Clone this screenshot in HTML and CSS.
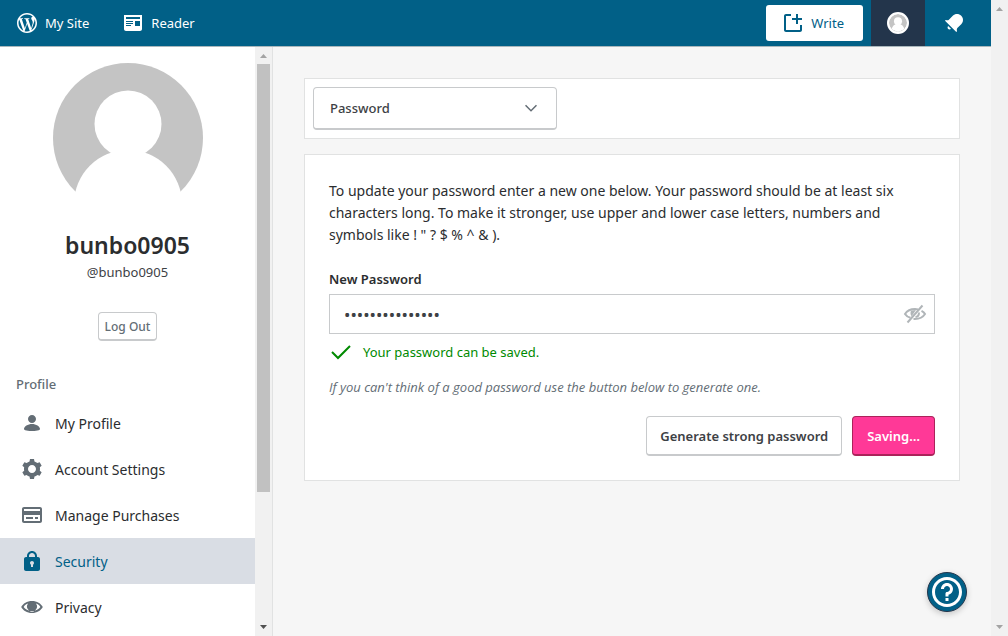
FILE: index.html
```html
<!DOCTYPE html>
<html lang="en">
<head>
<meta charset="utf-8">
<meta name="viewport" content="width=device-width, initial-scale=1">
<title>Security</title>
<link rel="stylesheet" href="styles.css">
</head>
<body>
<div class="app">
  <header class="masterbar">
    <a class="masterbar-item" href="#site">
      <svg class="icon" viewBox="0 0 24 24" aria-hidden="true"><path d="M12 2C6.477 2 2 6.477 2 12s4.477 10 10 10 10-4.477 10-10S17.523 2 12 2zM3.5 12c0-1.232.264-2.402.736-3.46L8.29 19.65C5.456 18.272 3.5 15.365 3.5 12zm8.5 8.501c-.834 0-1.64-.12-2.4-.345l2.55-7.41 2.613 7.157c.017.042.038.08.06.117-.884.31-1.833.48-2.823.48zm1.172-12.485c.512-.027.973-.08.973-.08.458-.055.404-.728-.054-.702 0 0-1.376.108-2.265.108-.835 0-2.24-.107-2.24-.107-.458-.026-.51.674-.053.7 0 0 .434.055.892.082l1.324 3.63-1.86 5.578-3.096-9.208c.512-.027.973-.08.973-.08.458-.055.403-.728-.055-.702 0 0-1.376.108-2.265.108-.16 0-.347-.003-.547-.01C6.418 5.025 9.03 3.5 12 3.5c2.213 0 4.228.846 5.74 2.232-.037-.002-.072-.007-.11-.007-.835 0-1.427.727-1.427 1.51 0 .7.404 1.292.835 1.993.323.566.7 1.293.7 2.344 0 .727-.28 1.572-.646 2.748l-.848 2.833-3.072-9.138zm3.1 11.332l2.597-7.506c.484-1.212.645-2.18.645-3.044 0-.313-.02-.603-.057-.874.664 1.21 1.042 2.6 1.042 4.078 0 3.136-1.7 5.874-4.227 7.347z"/></svg>
      <span>My Site</span>
    </a>
    <a class="masterbar-item" href="#reader">
      <svg class="icon" viewBox="0 0 24 24" aria-hidden="true"><path d="M3 4v14c0 1.1.9 2 2 2h14c1.1 0 2-.9 2-2V4H3zm7 11H5v-1h5v1zm2-2H5v-1h7v1zm0-2H5v-1h7v1zm7 4h-5v-5h5v5zm0-7H5V6h14v2z"/></svg>
      <span>Reader</span>
    </a>
    <a class="write" href="#write">
      <svg class="icon" viewBox="0 0 24 24" aria-hidden="true"><path d="M21 14v5c0 1.1-.9 2-2 2H5c-1.1 0-2-.9-2-2V5c0-1.1.9-2 2-2h5v2H5v14h14v-5h2z"/><path d="M21 7h-4V3h-2v4h-4v2h4v4h2V9h4V7z"/></svg>
      <span>Write</span>
    </a>
    <a class="me" href="#me" aria-label="My profile">
      <svg class="me-avatar" viewBox="0 0 150 150" aria-hidden="true"><circle cx="75" cy="75" r="75" fill="#c4c4c4"/><circle cx="75" cy="61" r="33.5" fill="#fff"/><path d="M22 128a54 54 0 0 1 106 0L75 150z" fill="#fff"/></svg>
    </a>
    <a class="bell" href="#notifications" aria-label="Notifications">
      <svg class="icon" viewBox="0 0 24 24" aria-hidden="true"><path d="M6.14 14.97l2.828 2.827c-.362.362-.862.586-1.414.586-1.105 0-2-.895-2-2 0-.552.224-1.052.586-1.414zm8.867 5.324L14.3 21 3 9.7l.706-.707 1.102.157c.754.108 1.69-.122 2.077-.51l3.885-3.884c2.34-2.34 6.135-2.34 8.475 0s2.34 6.135 0 8.475l-3.885 3.886c-.388.388-.618 1.323-.51 2.077l.157 1.1z"/></svg>
    </a>
  </header>

  <div class="page">
    <aside class="sidebar">
      <div class="sidebar-content">
        <div class="profile">
          <svg class="avatar" viewBox="0 0 150 150" role="img" aria-label="Avatar"><circle cx="75" cy="75" r="75" fill="#c4c4c4"/><circle cx="75" cy="61" r="33.5" fill="#fff"/><circle cx="75" cy="141" r="54" fill="#fff"/></svg>
          <h2 class="name">bunbo0905</h2>
          <div class="handle">@bunbo0905</div>
          <button class="logout" type="button">Log Out</button>
        </div>
        <nav class="menu">
          <h3 class="menu-heading">Profile</h3>
          <a class="menu-item" href="#profile">
            <svg class="icon" viewBox="0 0 24 24" aria-hidden="true"><path d="M12 4c2.21 0 4 1.79 4 4s-1.79 4-4 4-4-1.79-4-4 1.79-4 4-4zm0 16s8 0 8-2c0-2.4-3.9-5-8-5s-8 2.6-8 5c0 2 8 2 8 2z"/></svg>
            <span>My Profile</span>
          </a>
          <a class="menu-item" href="#account">
            <svg class="icon" viewBox="0 0 24 24" aria-hidden="true"><path d="M20 12c0-.568-.06-1.122-.174-1.656l1.834-1.612-2-3.464-2.322.786c-.82-.736-1.787-1.308-2.86-1.657L14 2h-4l-.48 2.396c-1.07.35-2.04.92-2.858 1.657L4.34 5.268l-2 3.464 1.834 1.612C4.06 10.878 4 11.432 4 12s.06 1.122.174 1.656L2.34 15.268l2 3.464 2.322-.786c.82.736 1.787 1.308 2.86 1.657L10 22h4l.48-2.396c1.07-.35 2.038-.92 2.858-1.657l2.322.786 2-3.464-1.834-1.613c.113-.535.174-1.09.174-1.656zm-8 4c-2.21 0-4-1.79-4-4s1.79-4 4-4 4 1.79 4 4-1.79 4-4 4z"/></svg>
            <span>Account Settings</span>
          </a>
          <a class="menu-item" href="#purchases">
            <svg class="icon" viewBox="0 0 24 24" aria-hidden="true"><path d="M20 4H4c-1.105 0-2 .895-2 2v12c0 1.105.895 2 2 2h16c1.105 0 2-.895 2-2V6c0-1.105-.895-2-2-2zm0 2v2H4V6h16zM4 18v-6h16v6H4zm2-4h7v2H6v-2zm9 0h3v2h-3v-2z"/></svg>
            <span>Manage Purchases</span>
          </a>
          <a class="menu-item selected" href="#security" aria-current="page">
            <svg class="icon" viewBox="0 0 24 24" aria-hidden="true"><path d="M18 8h-1V7c0-2.757-2.243-5-5-5S7 4.243 7 7v1H6c-1.105 0-2 .895-2 2v10c0 1.105.895 2 2 2h12c1.105 0 2-.895 2-2V10c0-1.105-.895-2-2-2zM9 7c0-1.654 1.346-3 3-3s3 1.346 3 3v1H9V7zm4 8.723V18h-2v-2.277c-.595-.346-1-.984-1-1.723 0-1.105.895-2 2-2s2 .895 2 2c0 .738-.405 1.376-1 1.723z"/></svg>
            <span>Security</span>
          </a>
          <a class="menu-item" href="#privacy">
            <svg class="icon" viewBox="0 0 24 24" aria-hidden="true"><path fill-rule="evenodd" d="M1.2 12C3 8.600 7 6 12 6s9 2.600 10.800 6C21 15.400 17 18 12 18s-9-2.600-10.800-6zM3.600 12c1.400 2.200 4.600 4 8.400 4s7-1.800 8.400-4c-1-1.600-2.500-2.700-4.500-3.400a4.900 4.900 0 1 1-7.800 0C6.100 9.300 4.600 10.400 3.600 12z"/><circle cx="12" cy="11" r="4.300"/></svg>
            <span>Privacy</span>
          </a>
        </nav>
      </div>
      <div class="scrollbar" aria-hidden="true">
        <svg class="arrow" viewBox="0 0 17 17"><path d="M5 11h7L8.500 7z" fill="#a3a3a3"/></svg>
        <div class="thumb"></div>
        <svg class="arrow arrow-end" viewBox="0 0 17 17"><path d="M5 6h7l-3.500 4z" fill="#505050"/></svg>
      </div>
    </aside>

    <main class="content">
      <div class="card nav-card">
        <div class="picker">
          <select class="picker-select" aria-label="Section">
            <option>Password</option>
          </select>
          <svg class="picker-arrow" viewBox="0 0 24 24" aria-hidden="true"><path d="M20 9l-8 8-8-8 1.414-1.414L12 14.172l6.586-6.586z"/></svg>
        </div>
      </div>
      <form class="card form-card">
        <p class="intro">To update your password enter a new one below. Your password should be at least six characters long. To make it stronger, use upper and lower case letters, numbers and symbols like ! " ? $ % ^ &amp; ).</p>
        <label class="label" for="password">New Password</label>
        <div class="field">
          <input class="password" id="password" type="password" value="abcdefghijklmno">
          <button class="toggle" type="button" aria-label="Show password">
            <svg class="icon" viewBox="0 0 24 24" aria-hidden="true"><g fill="none" stroke="currentColor" stroke-width="2"><path d="M7.500 15.800C4.500 15 2.800 13.300 2 12c1.800-2.800 5.500-5 10-5 1 0 2 .1 3 .4M18.500 8.800c1.700.9 2.800 2 3.500 3.200-1.800 2.800-5.500 5-10 5h-1.500"/><path d="M4.500 20.500l15-17" stroke-width="2"/><path d="M16 10.500c0 2.500-1.200 4.300-3.500 4.500"/></g><path d="M8 8.500c-1 3-.3 4.500.6 5.700L13 8z"/></svg>
          </button>
        </div>
        <div class="valid">
          <svg class="icon" viewBox="0 0 24 24" aria-hidden="true"><path d="M9 19.414l-6.707-6.707 1.414-1.414L9 16.586 20.293 5.293l1.414 1.414z"/></svg>
          <span>Your password can be saved.</span>
        </div>
        <p class="hint">If you can't think of a good password use the button below to generate one.</p>
        <div class="actions">
          <button class="button" type="button">Generate strong password</button>
          <button class="button primary" type="submit">Saving…</button>
        </div>
      </form>
      <button class="help" type="button" aria-label="Help">
        <svg class="help-icon" viewBox="0 0 24 24" aria-hidden="true"><path d="M12 4c4.411 0 8 3.589 8 8s-3.589 8-8 8-8-3.589-8-8 3.589-8 8-8m0-2C6.477 2 2 6.477 2 12s4.477 10 10 10 10-4.477 10-10S17.523 2 12 2zm4 8c0-2.210-1.790-4-4-4s-4 1.790-4 4h2c0-1.103.897-2 2-2s2 .897 2 2-.897 2-2 2c-.552 0-1 .448-1 1v2h2v-1.141c1.722-.447 3-1.999 3-3.859zm-3 6h-2v2h2v-2z"/></svg>
      </button>
    </main>
  </div>
</div>
<div class="scrollbar" aria-hidden="true">
  <svg class="arrow" viewBox="0 0 17 17"><path d="M5 11h7L8.500 7z" fill="#a3a3a3"/></svg>
  <svg class="arrow arrow-end" viewBox="0 0 17 17"><path d="M5 6h7l-3.500 4z" fill="#a3a3a3"/></svg>
</div>
</body>
</html>
```

FILE: styles.css
```css
* {
  box-sizing: border-box;
}

body {
  margin: 0;
  display: flex;
  height: 100vh;
  overflow: hidden;
  background: #f6f6f6;
  color: #2b2d2f;
  font-family: "Noto Sans", "Open Sans", sans-serif;
  font-size: 14px;
  line-height: 22px;
}

a {
  color: inherit;
  text-decoration: none;
}

button,
input,
select {
  margin: 0;
  font: inherit;
  color: inherit;
}

h2,
h3,
p {
  margin: 0;
}

.icon {
  width: 24px;
  height: 24px;
  flex: none;
  fill: currentColor;
}

.app {
  flex: 1;
  min-width: 0;
  display: flex;
  flex-direction: column;
}

.masterbar {
  flex: none;
  display: flex;
  align-items: center;
  gap: 2px;
  height: 47px;
  background: #016087;
  border-bottom: 1px solid #a9b7bc;
  color: #fff;
  font-size: 13px;
}

.masterbar-item {
  display: flex;
  align-items: center;
  gap: 6px;
  padding: 0 15px;
}

.write {
  display: flex;
  align-items: center;
  gap: 6px;
  height: 36px;
  margin: 0 6px 0 auto;
  padding: 0 19px 0 15px;
  border-radius: 3px;
  background: #fff;
  color: #016087;
}

.me,
.bell {
  display: flex;
  align-items: center;
  justify-content: center;
  width: 54px;
  height: 46px;
}

.me {
  background: #23354b;
}

.bell {
  margin-right: 10px;
}

.me-avatar {
  width: 22px;
  height: 22px;
  border: 2px solid #fff;
  border-radius: 50%;
  background: #fff;
}

.page {
  flex: 1;
  min-height: 0;
  display: flex;
}

.sidebar {
  flex: none;
  width: 273px;
  display: flex;
  background: #fff;
  border-right: 1px solid #e1e2e2;
}

.sidebar-content {
  flex: 1;
  overflow: hidden;
}

.scrollbar {
  flex: none;
  width: 17px;
  display: flex;
  flex-direction: column;
  background: #f1f1f1;
}

.arrow {
  width: 17px;
  height: 17px;
  flex: none;
}

.arrow-end {
  margin-top: auto;
}

.thumb {
  height: 428px;
  margin: 0 2px;
  background: #c1c1c1;
}

.profile {
  display: flex;
  flex-direction: column;
  align-items: center;
  padding-top: 16px;
}

.avatar {
  width: 150px;
  height: 150px;
}

.name {
  margin: 16px 0 2px;
  font-size: 23px;
  line-height: 32px;
  font-weight: 600;
}

.handle {
  font-size: 13px;
  line-height: 18px;
  color: #3d4145;
}

.logout {
  height: 29px;
  margin-top: 31px;
  padding: 1px 6px 0;
  border: 1px solid #c8cacc;
  border-bottom-width: 2px;
  border-radius: 4px;
  background: #fff;
  color: #636d75;
  font-size: 12px;
  line-height: 18px;
  font-weight: 500;
}

.menu {
  margin-top: 32px;
}

.menu-heading {
  padding: 0 16px 5px;
  font-size: 13px;
  line-height: 22px;
  font-weight: 500;
  color: #636d75;
}

.menu-item {
  display: flex;
  align-items: center;
  gap: 11px;
  height: 46px;
  padding: 0 20px;
}

.menu-item span {
  padding-top: 2px;
}

.menu-item .icon {
  color: #636d75;
}

.menu-item.selected {
  background: #d9dde4;
  color: #016087;
}

.menu-item.selected .icon {
  color: #016087;
}

.content {
  flex: 1;
  min-width: 0;
  padding: 31px;
}

.card {
  background: #fff;
  border: 1px solid #e1e2e2;
}

.nav-card {
  margin-bottom: 15px;
  padding: 8px;
}

.picker {
  position: relative;
  width: 244px;
}

.picker-select {
  display: block;
  width: 100%;
  height: 43px;
  padding: 0 16px;
  appearance: none;
  border: 1px solid #c8cacc;
  border-bottom-width: 2px;
  border-radius: 4px;
  background: #fff;
  color: #3d4145;
  font-size: 13px;
  font-weight: 500;
}

.picker-arrow {
  position: absolute;
  top: 12px;
  right: 17px;
  width: 18px;
  height: 18px;
  fill: #636d75;
  pointer-events: none;
}

.form-card {
  padding: 25px 24px 24px;
}

.intro {
  margin-bottom: 23px;
}

.label {
  display: block;
  margin-bottom: 5px;
  font-size: 13px;
  line-height: 20px;
  font-weight: 600;
}

.field {
  position: relative;
}

.password {
  display: block;
  width: 100%;
  height: 40px;
  padding: 0 48px 0 14px;
  border: 1px solid #c8cacc;
  border-radius: 0;
  background: #fff;
  color: #3d4145;
  font-size: 17px;
}

.toggle {
  position: absolute;
  top: 8px;
  right: 8px;
  padding: 0;
  border: 0;
  background: none;
  color: #b0b5b8;
  line-height: 0;
}

.valid {
  display: flex;
  align-items: center;
  gap: 10px;
  margin-top: 6px;
  color: #008a00;
  font-size: 13px;
}

.hint {
  margin: 13px 0 19px;
  font-family: "Open Sans", "Noto Sans", sans-serif;
  font-size: 13px;
  line-height: 20px;
  font-style: italic;
  color: #636d75;
}

.actions {
  display: flex;
  justify-content: flex-end;
  gap: 10px;
}

.button {
  height: 40px;
  padding: 0 13px;
  border: 1px solid #c8cacc;
  border-bottom-width: 2px;
  border-radius: 4px;
  background: #fff;
  color: #3d4145;
  font-size: 13px;
  font-weight: 600;
}

.button.primary {
  padding: 0 14px;
  border-color: #ab235a;
  background: #ff3997;
  color: #fff;
}

.help {
  position: fixed;
  right: 41px;
  bottom: 24px;
  display: flex;
  align-items: center;
  justify-content: center;
  width: 40px;
  height: 40px;
  padding: 0;
  border: 1px solid #23354b;
  border-radius: 50%;
  background: #016087;
  box-shadow: 0 2px 6px rgba(0, 0, 0, 0.2);
}

.help-icon {
  width: 36px;
  height: 36px;
  flex: none;
  fill: #fff;
}
```
